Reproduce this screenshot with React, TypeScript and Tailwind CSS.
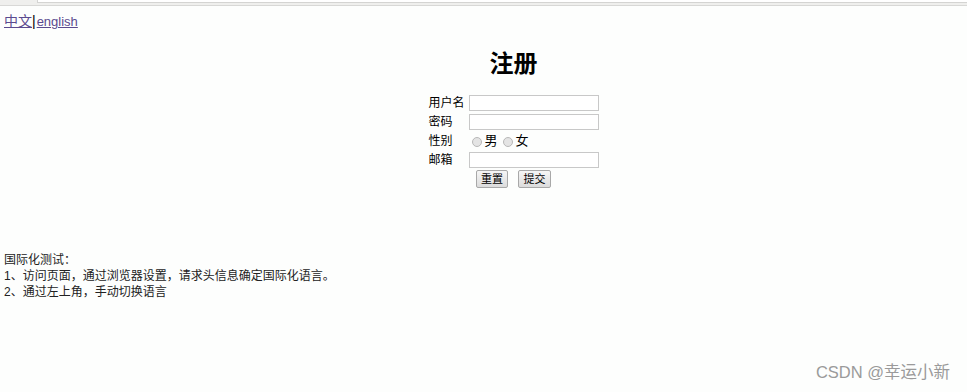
import React from 'react';

const cjk = { fontFamily: '"Liberation Sans", "Noto Sans CJK SC", sans-serif' };

function Radio() {
  return <span className="inline-block w-[10px] h-[10px] rounded-full border border-[#b8b8b8] bg-[#e4e4e4] mr-[3px] translate-y-[1px]" />;
}

export default function App() {
  return (
    <div className="w-[967px] h-[392px] bg-[#fdfefd] text-black relative overflow-hidden" style={cjk}>
      {/* browser edge */}
      <div className="h-[6px] flex bg-[#efefed] border-b border-[#d8d8d6]">
        <div className="w-[37px]" />
        <div className="flex-1 h-[3px] bg-white border-b border-l border-[#d4d4d2]" />
      </div>

      <div className="pl-[4px] pt-[7px] text-[14px] leading-[16px]">
        <a className="underline text-[#5b4a8f]">中文</a>
        <span>|</span>
        <a className="underline text-[#5b4a8f] ml-[1px] text-[13px]">english</a>
      </div>

      <h1 className="text-center text-[24px] font-bold leading-[28px] mt-[20px] pl-[60px]">注册</h1>

      <div className="flex justify-center mt-[15px] pl-[60px]">
        <div className="text-[12px] leading-[16px]">
          <div className="flex items-center h-[19px]">
            <span className="w-[40px]">用户名</span>
            <span className="w-[130px] h-[16px] border border-[#c8c8c8] bg-white" />
          </div>
          <div className="flex items-center h-[19px]">
            <span className="w-[40px]">密码</span>
            <span className="w-[130px] h-[16px] border border-[#c8c8c8] bg-white" />
          </div>
          <div className="flex items-center h-[19px]">
            <span className="w-[43px]">性别</span>
            <Radio />
            <span className="mr-[5px] text-[13px]">男</span>
            <Radio />
            <span className="text-[13px]">女</span>
          </div>
          <div className="flex items-center h-[19px]">
            <span className="w-[40px]">邮箱</span>
            <span className="w-[130px] h-[16px] border border-[#c8c8c8] bg-white" />
          </div>
          <div className="flex justify-center gap-[10px] mt-[1px]">
            <span className="w-[32px] h-[18px] border border-[#a8a8a8] rounded-[2px] bg-gradient-to-b from-[#f6f6f6] to-[#dcdcdc] text-[11px] leading-[16px] text-center">重置</span>
            <span className="w-[33px] h-[18px] border border-[#a8a8a8] rounded-[2px] bg-gradient-to-b from-[#f6f6f6] to-[#dcdcdc] text-[11px] leading-[16px] text-center">提交</span>
          </div>
        </div>
      </div>

      <div className="pl-[4px] mt-[64px] text-[12px] leading-[16px] text-[#222]">
        <p>国际化测试：</p>
        <p>1、访问页面，通过浏览器设置，请求头信息确定国际化语言。</p>
        <p>2、通过左上角，手动切换语言</p>
      </div>

      <div className="absolute right-[17px] bottom-[7px] text-[16.5px] text-[#9a9a9a]">CSDN @幸运小新</div>
    </div>
  );
}
